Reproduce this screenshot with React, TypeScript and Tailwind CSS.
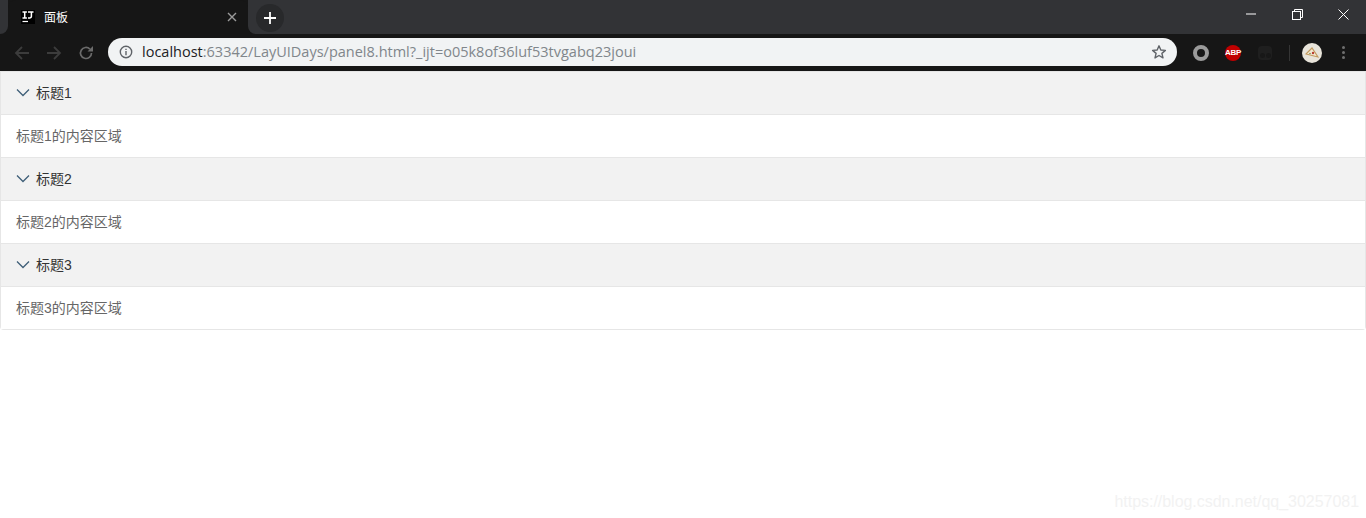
const font = { fontFamily: '"Liberation Sans", "Noto Sans CJK SC", sans-serif' };

function Chevron() {
  return (
    <svg width="14" height="9" viewBox="0 0 14 9" className="mr-[6px] mb-px shrink-0" fill="none">
      <path d="M1 1.5 L7 7.5 L13 1.5" stroke="#3f5f78" strokeWidth="1.3" />
    </svg>
  );
}

function Item({ n }: { n: number }) {
  return (
    <div className="border-t border-[#e6e6e6]">
      <div className="h-[42px] bg-[#f2f2f2] flex items-center pl-[15px] text-[14px] text-[#333333]">
        <Chevron />
        <span>标题{n}</span>
      </div>
      <div className="h-[43px] border-t border-[#e6e6e6] bg-white flex items-center pl-[15px] text-[14px] text-[#666666]">
        标题{n}的内容区域
      </div>
    </div>
  );
}

export default function App() {
  return (
    <div className="relative w-[1366px] h-[518px] overflow-hidden bg-white" style={font}>
      {/* Tab strip */}
      <div className="h-[34px] bg-[#161616] flex">
        <div className="w-2 bg-[#323336] rounded-br-lg" />
        <div className="w-[240px] bg-[#161616] rounded-t-lg flex items-center pl-[13px] pr-[11px]">
          <svg width="14" height="14" viewBox="0 0 14 14" className="shrink-0">
            <rect width="14" height="14" fill="#000" />
            <path d="M1.5 2h4.4M3.7 2v6M1.5 8h4.4M7 2h5.5M10.4 2v4.4Q10.4 8 7 8" stroke="#fff" strokeWidth="1.5" fill="none" />
            <path d="M1.5 11.5h5.5" stroke="#fff" strokeWidth="1.2" />
          </svg>
          <span className="ml-[9px] mt-px text-[12px] text-white flex-1">面板</span>
          <svg width="10" height="10" viewBox="0 0 10 10">
            <path d="M1 1L9 9M9 1L1 9" stroke="#9b9b9b" strokeWidth="1.4" />
          </svg>
        </div>
        <div className="flex-1 bg-[#323336] rounded-bl-lg flex">
          <div className="ml-2 mt-1 w-7 h-7 rounded-full bg-[#28292b] flex items-center justify-center">
            <svg width="12" height="12" viewBox="0 0 12 12">
              <path d="M6 0V12M0 6H12" stroke="#fff" strokeWidth="1.8" />
            </svg>
          </div>
          <div className="ml-auto flex h-[28px] items-center">
            <div className="w-[46px] flex justify-center">
              <svg width="10" height="10" viewBox="0 0 10 10"><path d="M0 5H10" stroke="#fff" strokeWidth="1" /></svg>
            </div>
            <div className="w-[46px] flex justify-center">
              <svg width="11" height="11" viewBox="0 0 11 11" fill="none">
                <rect x="0.5" y="2.5" width="8" height="8" stroke="#fff" />
                <path d="M2.5 2.5V0.5H10.5V8.5H8.5" stroke="#fff" />
              </svg>
            </div>
            <div className="w-[46px] flex justify-center">
              <svg width="11" height="11" viewBox="0 0 11 11"><path d="M0.5 0.5L10.5 10.5M10.5 0.5L0.5 10.5" stroke="#fff" strokeWidth="1" /></svg>
            </div>
          </div>
        </div>
      </div>
      {/* Toolbar */}
      <div className="h-[37px] bg-[#161616] flex items-center">
        <div className="flex w-[108px] items-center pl-[14px] gap-[16px]">
          <svg width="16" height="16" viewBox="0 0 16 16" fill="none"><path d="M15 8H2M8 2L2 8L8 14" stroke="#3c3c3c" strokeWidth="1.8" /></svg>
          <svg width="16" height="16" viewBox="0 0 16 16" fill="none"><path d="M1 8H14M8 2L14 8L8 14" stroke="#3c3c3c" strokeWidth="1.8" /></svg>
          <svg width="16" height="16" viewBox="0 0 16 16" fill="none"><path d="M13.5 8A5.5 5.5 0 1 1 11.9 4.1" stroke="#6b6b6b" strokeWidth="1.7" /><path d="M15 1V6.5H9.5Z" fill="#6b6b6b" /></svg>
        </div>
        <div className="w-[1069px] h-[28px] mb-px rounded-full bg-[#f1f3f4] flex items-center pl-[11px] pr-[10px] text-[14.5px] font-['Open_Sans',sans-serif]">
          <svg width="14" height="14" viewBox="0 0 14 14" fill="none" className="shrink-0">
            <circle cx="7" cy="7" r="5.7" stroke="#5f6368" strokeWidth="1.4" />
            <path d="M7 6V10.2M7 3.8V5" stroke="#5f6368" strokeWidth="1.4" />
          </svg>
          <span className="ml-[9px] mb-px text-[#202124]">localhost</span>
          <span className="mb-px text-[#80868b]">:63342/LayUIDays/panel8.html?_ijt=o05k8of36luf53tvgabq23joui</span>
          <svg width="16" height="16" viewBox="0 0 16 16" fill="none" className="ml-auto">
            <path d="M8 1.8L9.8 6L14.4 6.4L10.9 9.4L12 13.9L8 11.5L4 13.9L5.1 9.4L1.6 6.4L6.2 6Z" stroke="#5f6368" strokeWidth="1.4" strokeLinejoin="round" />
          </svg>
        </div>
        <div className="flex items-center pl-[16px]">
          <div className="w-4 h-4 rounded-full border-[4px] border-[#9a9a9a]" />
          <div className="ml-[16px] w-4 h-4 rounded-full bg-[#c00000] text-white text-[8px] font-bold flex items-center justify-center tracking-[-0.3px]">ABP</div>
          <div className="ml-[17px] w-[14px] h-[14px] rounded-sm bg-[#1f1f1f] flex items-end justify-center gap-px pb-[2px]">
            <span className="w-[5px] h-[5px] rounded-full bg-[#181818]" />
            <span className="w-[5px] h-[5px] rounded-full bg-[#181818]" />
          </div>
          <div className="ml-[17px] w-px h-4 bg-[#353535]" />
          <div className="ml-[12px] w-5 h-5 rounded-full bg-[#e8e4da] flex items-center justify-center">
            <svg width="14" height="12" viewBox="0 0 14 12" fill="none">
              <path d="M1 7L7 1L13 10Z" fill="#f3ead6" stroke="#c29a5e" strokeWidth="1.2" />
              <circle cx="8" cy="6" r="1.2" fill="#b83a2e" />
              <circle cx="5" cy="6.5" r="0.8" fill="#7c8b4a" />
            </svg>
          </div>
          <div className="ml-5 flex flex-col gap-[2px]">
            <span className="w-[3px] h-[3px] rounded-full bg-[#6f6f6f]" />
            <span className="w-[3px] h-[3px] rounded-full bg-[#6f6f6f]" />
            <span className="w-[3px] h-[3px] rounded-full bg-[#6f6f6f]" />
          </div>
        </div>
      </div>
      {/* Collapse panel */}
      <div className="border-x border-b border-[#e6e6e6] rounded-b-sm">
        <Item n={1} />
        <Item n={2} />
        <Item n={3} />
      </div>
      <div className="absolute right-[7px] top-[490px] text-[16px] tracking-[-0.03px] text-[#f2f2f2]">https://blog.csdn.net/qq_30257081</div>
    </div>
  );
}
